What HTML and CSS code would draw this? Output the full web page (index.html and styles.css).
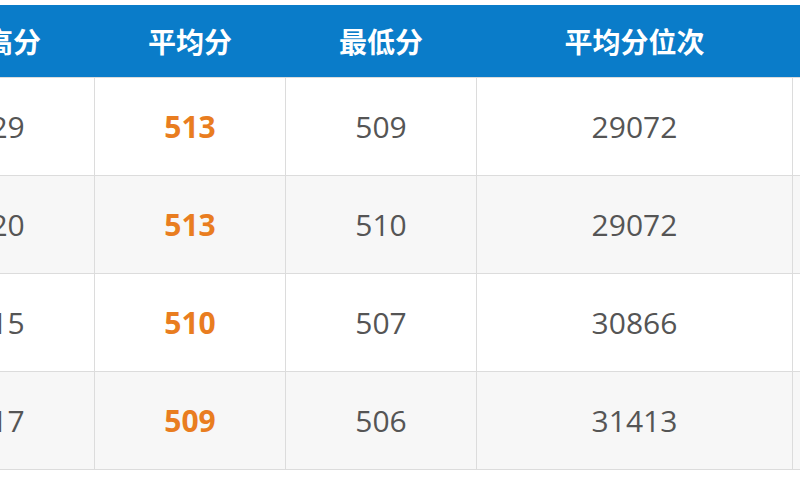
FILE: index.html
```html
<!DOCTYPE html>
<html lang="zh">
<head>
<meta charset="utf-8">
<title>分数线</title>
<link rel="stylesheet" href="styles.css">
</head>
<body>
<div class="wrap">
<table class="score">
<colgroup>
<col class="c-std"><col class="c-std"><col class="c-std"><col class="c-wide"><col class="c-std">
</colgroup>
<thead>
<tr><th>最高分</th><th>平均分</th><th>最低分</th><th>平均分位次</th><th></th></tr>
</thead>
<tbody>
<tr><td>529</td><td class="avg">513</td><td>509</td><td>29072</td><td></td></tr>
<tr class="alt"><td>520</td><td class="avg">513</td><td>510</td><td>29072</td><td></td></tr>
<tr><td>515</td><td class="avg">510</td><td>507</td><td>30866</td><td></td></tr>
<tr class="alt"><td>517</td><td class="avg">509</td><td>506</td><td>31413</td><td></td></tr>
</tbody>
</table>
</div>
</body>
</html>
```
FILE: styles.css
```css
html, body {
  margin: 0;
  padding: 0;
  background: #fff;
  overflow: hidden;
}
.wrap {
  padding-top: 5px;
  margin-left: -97px;
}
.score {
  border-collapse: collapse;
  table-layout: fixed;
  width: 1078px;
}
.c-std { width: 191px; }
.c-wide { width: 316px; }
.score th {
  height: 72px;
  padding: 0;
  background: #0a7cc9;
  color: #fff;
  font-family: "Noto Sans CJK SC", "Noto Sans", sans-serif;
  font-weight: 700;
  font-size: 28px;
  text-align: center;
  border: none;
}
.score td {
  height: 97px;
  padding: 0;
  border: 1px solid #dcdcdc;
  text-align: center;
  font-family: "Open Sans", "Noto Sans", sans-serif;
  font-size: 30px;
  color: #555;
}
.score tr.alt td {
  background: #f7f7f7;
}
.score td.avg {
  color: #e97d20;
  font-weight: 700;
}
```
